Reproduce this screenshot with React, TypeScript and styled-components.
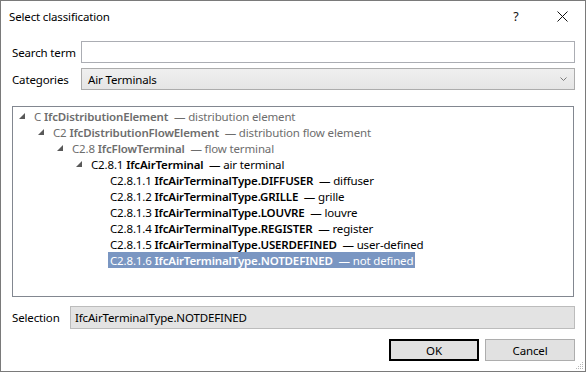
import React from 'react';
import styled, { createGlobalStyle } from 'styled-components';

type Node = {
  code: string;
  name: string;
  desc: string;
  level: number;
  expanded?: boolean;
  muted?: boolean;
  selected?: boolean;
};

const nodes: Node[] = [
  { code: 'C', name: 'IfcDistributionElement', desc: 'distribution element', level: 0, expanded: true, muted: true },
  { code: 'C2', name: 'IfcDistributionFlowElement', desc: 'distribution flow element', level: 1, expanded: true, muted: true },
  { code: 'C2.8', name: 'IfcFlowTerminal', desc: 'flow terminal', level: 2, expanded: true, muted: true },
  { code: 'C2.8.1', name: 'IfcAirTerminal', desc: 'air terminal', level: 3, expanded: true },
  { code: 'C2.8.1.1', name: 'IfcAirTerminalType.DIFFUSER', desc: 'diffuser', level: 4 },
  { code: 'C2.8.1.2', name: 'IfcAirTerminalType.GRILLE', desc: 'grille', level: 4 },
  { code: 'C2.8.1.3', name: 'IfcAirTerminalType.LOUVRE', desc: 'louvre', level: 4 },
  { code: 'C2.8.1.4', name: 'IfcAirTerminalType.REGISTER', desc: 'register', level: 4 },
  { code: 'C2.8.1.5', name: 'IfcAirTerminalType.USERDEFINED', desc: 'user-defined', level: 4 },
  { code: 'C2.8.1.6', name: 'IfcAirTerminalType.NOTDEFINED', desc: 'not defined', level: 4, selected: true },
];

const GlobalStyle = createGlobalStyle`
  html, body {
    margin: 0;
    padding: 0;
    background: #ffffff;
  }
  body {
    font-family: 'Noto Sans', 'Open Sans', sans-serif;
    font-size: 11.5px;
    letter-spacing: -0.15px;
    color: #000000;
  }
`;

const Window = styled.div`
  position: relative;
  box-sizing: border-box;
  width: 586px;
  height: 372px;
  border: 1px solid #7a7a7a;
  background: #ffffff;
  display: flex;
  flex-direction: column;
`;

const TitleBar = styled.div`
  height: 30px;
  display: flex;
  align-items: center;
  padding-left: 8px;
`;

const Title = styled.div`
  flex: 1;
  font-size: 11.5px;
`;

const CaptionButton = styled.div`
  width: 46px;
  height: 30px;
  display: flex;
  align-items: center;
  justify-content: center;
  font-size: 12.5px;
  color: #111111;
`;

const Content = styled.div`
  flex: 1;
  display: flex;
  flex-direction: column;
  padding: 10px 10px 0 10px;
`;

const FieldRow = styled.div<{ $gap?: number }>`
  display: flex;
  align-items: center;
  margin-top: ${({ $gap }) => $gap ?? 0}px;
`;

const Label = styled.div<{ $width: number }>`
  width: ${({ $width }) => $width}px;
  flex-shrink: 0;
  padding-left: 1px;
  white-space: nowrap;
`;

const TextBox = styled.div`
  box-sizing: border-box;
  flex: 1;
  height: 22px;
  border: 1px solid #abadb3;
  background: #ffffff;
`;

const ComboBox = styled.div`
  box-sizing: border-box;
  flex: 1;
  height: 22px;
  border: 1px solid #acacac;
  background: linear-gradient(#efefef, #e5e5e5);
  display: flex;
  align-items: center;
  padding: 0 7px 0 6px;
`;

const ComboText = styled.span`
  flex: 1;
`;

const TreePanel = styled.div`
  box-sizing: border-box;
  margin: 16px 1px 0 1px;
  height: 191px;
  border: 1px solid #828790;
  padding-top: 1px;
  display: flex;
  flex-direction: column;
`;

const Row = styled.div<{ $level: number }>`
  height: 16px;
  display: flex;
  align-items: center;
  padding-left: ${({ $level }) => $level * 19}px;
`;

const Expander = styled.div`
  width: 19px;
  height: 16px;
  flex-shrink: 0;
  display: flex;
  align-items: center;
  padding-left: 6px;
  box-sizing: border-box;
`;

const Header = styled.div<{ $muted?: boolean; $selected?: boolean }>`
  height: 16px;
  display: flex;
  align-items: center;
  padding: 0 2px;
  white-space: pre;
  color: ${({ $muted, $selected }) => ($selected ? '#ffffff' : $muted ? '#6d6d6d' : '#000000')};
  background: ${({ $selected }) => ($selected ? '#7a96c2' : 'transparent')};
`;

const Name = styled.span`
  font-weight: 600;
`;

const ReadOnlyBox = styled.div`
  box-sizing: border-box;
  flex: 1;
  height: 23px;
  border: 1px solid #bcbcbc;
  background: #e3e3e3;
  display: flex;
  align-items: center;
  padding-left: 4px;
`;

const ButtonRow = styled.div`
  display: flex;
  justify-content: flex-end;
  gap: 6px;
  margin-top: 10px;
`;

const Button = styled.div<{ $default?: boolean }>`
  box-sizing: border-box;
  width: 90px;
  height: 22px;
  display: flex;
  align-items: center;
  justify-content: center;
  background: #e1e1e1;
  border: ${({ $default }) => ($default ? '2px solid #000000' : '1px solid #adadad')};
`;

const Grip = styled.svg`
  position: absolute;
  right: 1px;
  bottom: 1px;
`;

const ExpandedArrow = () => (
  <svg width="6" height="6" viewBox="0 0 6 6">
    <polygon points="6,0 6,6 0,6" fill="#595959" />
  </svg>
);

export default function App() {
  return (
    <>
      <GlobalStyle />
      <Window>
        <TitleBar>
          <Title>Select classification</Title>
          <CaptionButton>?</CaptionButton>
          <CaptionButton>
            <svg width="11" height="11" viewBox="0 0 11 11">
              <path d="M0.5 0.5 L10.5 10.5 M10.5 0.5 L0.5 10.5" stroke="#111111" strokeWidth="1" />
            </svg>
          </CaptionButton>
        </TitleBar>
        <Content>
          <FieldRow>
            <Label $width={69}>Search term</Label>
            <TextBox />
          </FieldRow>
          <FieldRow $gap={5}>
            <Label $width={69}>Categories</Label>
            <ComboBox>
              <ComboText>Air Terminals</ComboText>
              <svg width="7" height="4" viewBox="0 0 7 4">
                <path d="M0.5 0.5 L3.5 3.5 L6.5 0.5" stroke="#7a7a7a" strokeWidth="1" fill="none" />
              </svg>
            </ComboBox>
          </FieldRow>
          <TreePanel>
            {nodes.map((n) => (
              <Row key={n.code} $level={n.level}>
                <Expander>{n.expanded ? <ExpandedArrow /> : null}</Expander>
                <Header $muted={n.muted} $selected={n.selected}>
                  {n.code} <Name>{n.name}</Name>  — {n.desc}
                </Header>
              </Row>
            ))}
          </TreePanel>
          <FieldRow $gap={9}>
            <Label $width={58}>Selection</Label>
            <ReadOnlyBox>IfcAirTerminalType.NOTDEFINED</ReadOnlyBox>
          </FieldRow>
          <ButtonRow>
            <Button $default>OK</Button>
            <Button>Cancel</Button>
          </ButtonRow>
        </Content>
        <Grip width="8" height="8" viewBox="0 0 8 8">
          {[
            [6, 0], [6, 2], [4, 2], [6, 4], [4, 4], [2, 4], [6, 6], [4, 6], [2, 6], [0, 6],
          ].map(([x, y]) => (
            <rect key={`${x}-${y}`} x={x} y={y} width="1" height="1" fill="#b8b8b8" />
          ))}
        </Grip>
      </Window>
    </>
  );
}
